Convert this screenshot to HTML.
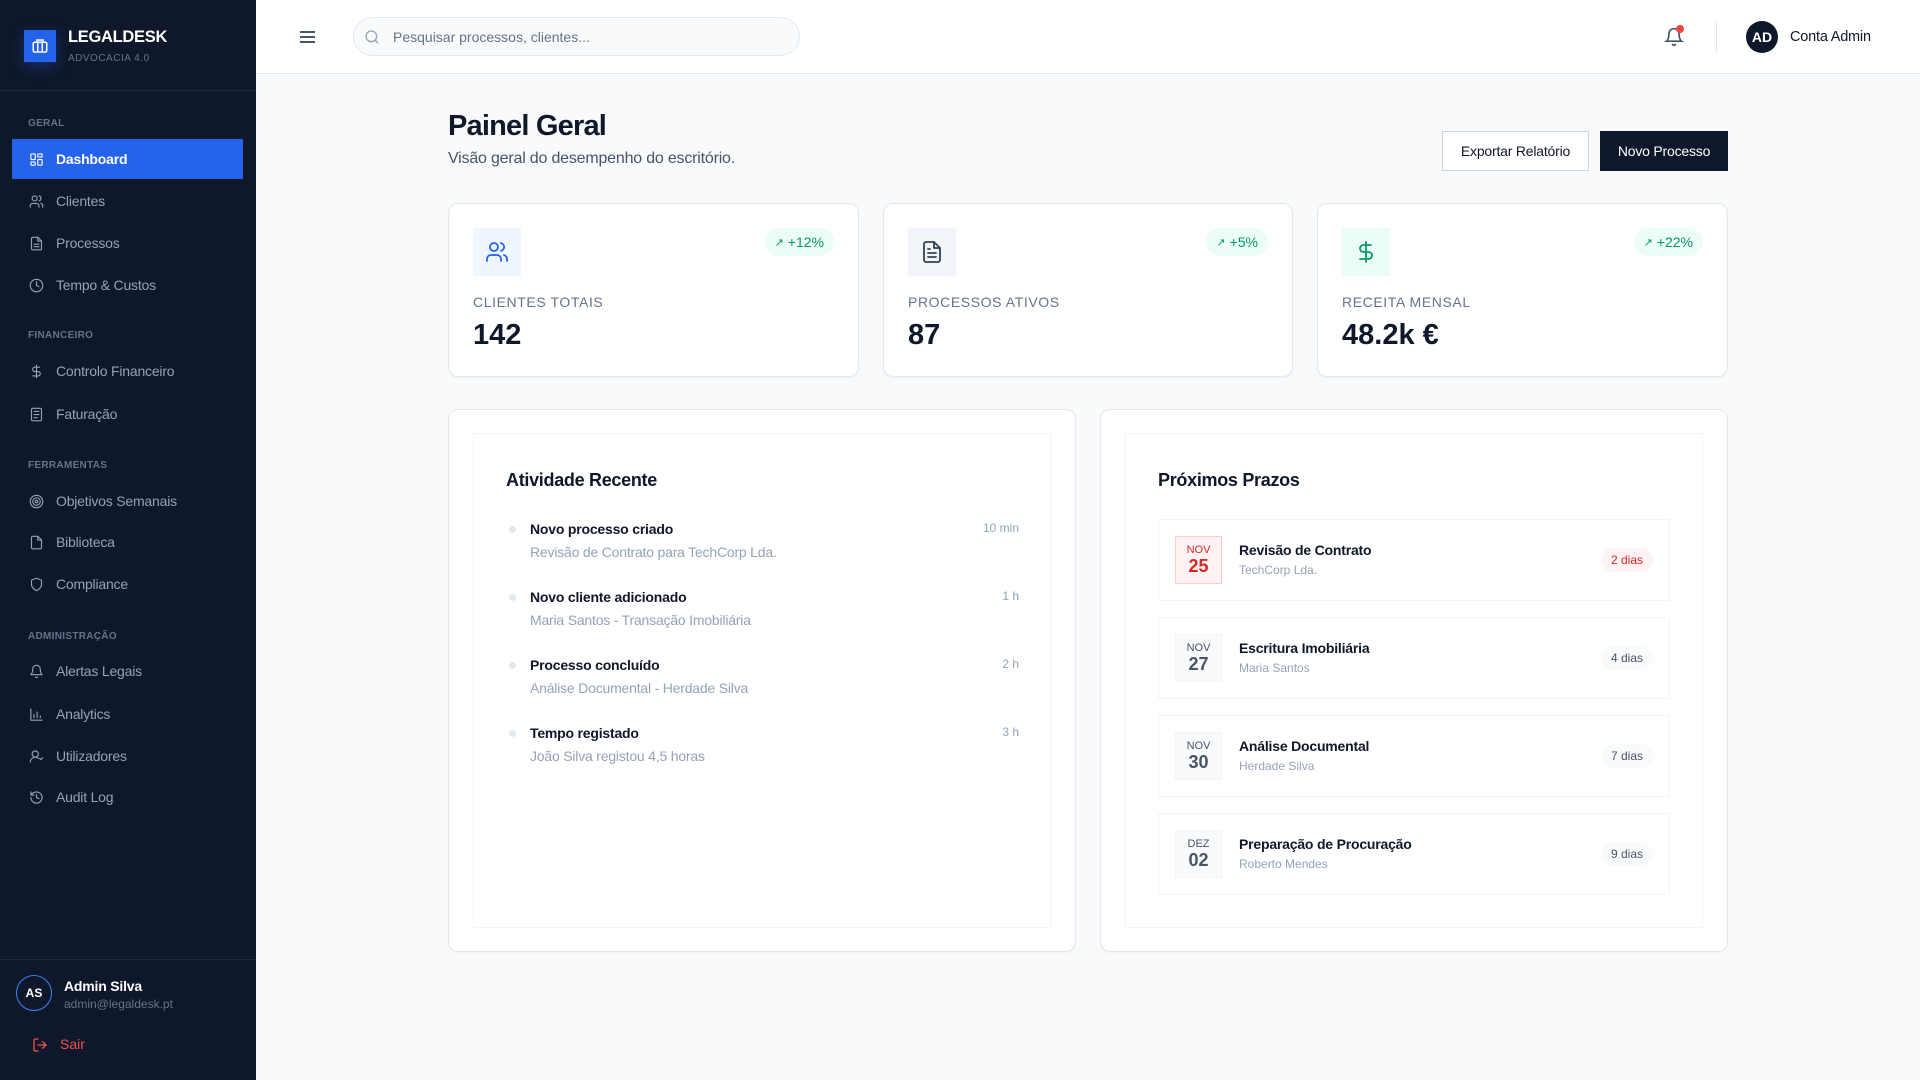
<!DOCTYPE html>
<html><head><meta charset="utf-8"><style>
*{box-sizing:border-box;margin:0;padding:0}
body{width:1920px;height:1080px;overflow:hidden;background:#f8fafc;font-family:"Liberation Sans",sans-serif;position:relative;color:#0f172a}
.abs{position:absolute}
#sb{left:0;top:0;width:256px;height:1080px;background:#0f172a}
.sec{position:absolute;left:28px;font-size:10px;font-weight:bold;color:#64748b;letter-spacing:.3px}
.it{position:absolute;left:12px;width:231px;height:40px;display:flex;align-items:center;padding-left:17px;color:#94a3b8;font-size:14px;letter-spacing:-.2px}
.it svg{width:15px;height:15px;margin-right:12px;fill:none;stroke:currentColor;stroke-width:1.8;stroke-linecap:round;stroke-linejoin:round}
.it.on{background:#2563eb;color:#fff;font-weight:bold}
.card{position:absolute;background:#fff;border:1px solid #e2e8f0;border-radius:10px;box-shadow:0 1px 2px rgba(0,0,0,.04)}
.ib{position:absolute;left:24px;top:24px;width:48px;height:48px;display:flex;align-items:center;justify-content:center}
.ib svg{width:24px;height:24px;fill:none;stroke-width:1.8;stroke-linecap:round;stroke-linejoin:round}
.badge{position:absolute;top:24px;right:24px;height:28px;padding:0 10px;border-radius:14px;background:#ecfdf5;color:#059669;font-size:14px;display:flex;align-items:center;gap:4px}
.lbl{position:absolute;left:24px;top:90px;font-size:14px;color:#64748b;letter-spacing:.6px}
.val{position:absolute;left:24px;top:115px;font-size:29px;font-weight:bold;color:#0f172a}
.act{position:absolute;left:509px;width:510px}
.act .d{position:absolute;left:0;top:5px;width:7px;height:7px;border-radius:50%;background:#e2e8f0}
.act .t{position:absolute;left:21px;top:0;font-size:14px;font-weight:bold;color:#0f172a;letter-spacing:-.2px}
.act .s{position:absolute;left:21px;top:23px;font-size:14px;color:#94a3b8;letter-spacing:-.2px}
.act .tm{position:absolute;right:0;top:0;font-size:12px;color:#94a3b8}
.dl{position:absolute;left:1158px;width:512px;height:82px;border:1px solid #f1f5f9;background:#fff}
.db{position:absolute;left:16px;top:16px;width:47px;height:48px;background:#f8fafc;border:1px solid #f1f5f9;text-align:center;color:#475569}
.db .m{font-size:11px;margin-top:7px;line-height:12px}
.db .n{font-size:18px;font-weight:bold;line-height:20px}
.dl .t{position:absolute;left:80px;top:22px;font-size:14px;font-weight:bold;color:#0f172a;letter-spacing:-.2px}
.dl .s{position:absolute;left:80px;top:43px;font-size:12px;color:#94a3b8}
.dl .b{position:absolute;right:16px;top:28px;height:24px;padding:0 10px;border-radius:12px;background:#f8fafc;color:#475569;font-size:12px;display:flex;align-items:center}
</style></head><body>
<div id="sb" class="abs">
 <div class="abs" style="left:0;top:90px;width:256px;height:1px;background:#1e293b"></div>
 <div class="abs" style="left:24px;top:30px;width:32px;height:32px;background:#2563eb;display:flex;align-items:center;justify-content:center;box-shadow:0 4px 14px rgba(37,99,235,.35)">
  <svg width="18" height="18" viewBox="0 0 24 24" fill="none" stroke="#fff" stroke-width="2" stroke-linecap="round"><rect x="3" y="7" width="18" height="13" rx="2"/><path d="M8 7V4h8v3M9 7v13M15 7v13"/></svg></div>
 <div class="abs" style="left:68px;top:28px;font-size:16.5px;font-weight:bold;color:#fff;letter-spacing:-.3px">LEGALDESK</div>
 <div class="abs" style="left:68px;top:53px;font-size:10px;color:#64748b;letter-spacing:.5px">ADVOCACIA 4.0</div>
 <div class="sec" style="top:118px">GERAL</div>
 <div class="it on" style="top:139px"><svg viewBox="0 0 24 24"><rect x="3" y="3" width="7" height="9" rx="1"/><rect x="14" y="3" width="7" height="5" rx="1"/><rect x="14" y="12" width="7" height="9" rx="1"/><rect x="3" y="16" width="7" height="5" rx="1"/></svg>Dashboard</div>
 <div class="it" style="top:181px"><svg viewBox="0 0 24 24"><circle cx="9" cy="7" r="4"/><path d="M2 21v-2a4 4 0 014-4h6a4 4 0 014 4v2M16 3.1a4 4 0 010 7.8M22 21v-2a4 4 0 00-3-3.9"/></svg>Clientes</div>
 <div class="it" style="top:223px"><svg viewBox="0 0 24 24"><path d="M14 2H6a2 2 0 00-2 2v16a2 2 0 002 2h12a2 2 0 002-2V8z"/><path d="M14 2v6h6M8 13h8M8 17h8"/></svg>Processos</div>
 <div class="it" style="top:265px"><svg viewBox="0 0 24 24"><circle cx="12" cy="12" r="10"/><path d="M12 6v6l4 2"/></svg>Tempo &amp; Custos</div>
 <div class="sec" style="top:330px">FINANCEIRO</div>
 <div class="it" style="top:351px"><svg viewBox="0 0 24 24"><path d="M12 2v20M17 5H9.5a3.5 3.5 0 000 7h5a3.5 3.5 0 010 7H6"/></svg>Controlo Financeiro</div>
 <div class="it" style="top:394px"><svg viewBox="0 0 24 24"><rect x="4" y="2" width="16" height="20" rx="2"/><path d="M8 7h8M8 12h8M8 17h5"/></svg>Faturação</div>
 <div class="sec" style="top:460px">FERRAMENTAS</div>
 <div class="it" style="top:481px"><svg viewBox="0 0 24 24"><circle cx="12" cy="12" r="10"/><circle cx="12" cy="12" r="6"/><circle cx="12" cy="12" r="2"/></svg>Objetivos Semanais</div>
 <div class="it" style="top:522px"><svg viewBox="0 0 24 24"><path d="M14 2H6a2 2 0 00-2 2v16a2 2 0 002 2h12a2 2 0 002-2V8z"/><path d="M14 2v6h6"/></svg>Biblioteca</div>
 <div class="it" style="top:564px"><svg viewBox="0 0 24 24"><path d="M12 22s8-4 8-10V5l-8-3-8 3v7c0 6 8 10 8 10z"/></svg>Compliance</div>
 <div class="sec" style="top:631px">ADMINISTRAÇÃO</div>
 <div class="it" style="top:651px"><svg viewBox="0 0 24 24"><path d="M18 8A6 6 0 006 8c0 7-3 9-3 9h18s-3-2-3-9M13.7 21a2 2 0 01-3.4 0"/></svg>Alertas Legais</div>
 <div class="it" style="top:694px"><svg viewBox="0 0 24 24"><path d="M3 3v18h18M8 17v-5M13 17V8M18 17v-3"/></svg>Analytics</div>
 <div class="it" style="top:736px"><svg viewBox="0 0 24 24"><circle cx="10" cy="8" r="5"/><path d="M2 21a8 8 0 0113-6M17 15l2 2 3-3"/></svg>Utilizadores</div>
 <div class="it" style="top:777px"><svg viewBox="0 0 24 24"><path d="M3 12a9 9 0 109-9 9.7 9.7 0 00-6.7 2.7L3 8M3 3v5h5M12 7v5l4 2"/></svg>Audit Log</div>
 <div class="abs" style="left:0;top:959px;width:256px;height:1px;background:#1e293b"></div>
 <div class="abs" style="left:16px;top:975px;width:36px;height:36px;border-radius:50%;border:1.5px solid #3b82f6;color:#fff;font-size:12px;font-weight:bold;display:flex;align-items:center;justify-content:center">AS</div>
 <div class="abs" style="left:64px;top:978px;font-size:14px;font-weight:bold;color:#fff;letter-spacing:-.2px">Admin Silva</div>
 <div class="abs" style="left:64px;top:997px;font-size:12px;color:#64748b">admin@legaldesk.pt</div>
 <svg class="abs" style="left:32px;top:1037px" width="16" height="16" viewBox="0 0 24 24" fill="none" stroke="#ef5350" stroke-width="2" stroke-linecap="round" stroke-linejoin="round"><path d="M9 21H5a2 2 0 01-2-2V5a2 2 0 012-2h4M16 17l5-5-5-5M21 12H9"/></svg>
 <div class="abs" style="left:60px;top:1036px;font-size:14px;color:#ef5350">Sair</div>
</div>
<div class="abs" style="left:256px;top:0;width:1664px;height:74px;background:#fff;border-bottom:1px solid #e2e8f0"></div>
<svg class="abs" style="left:299px;top:29px" width="17" height="16" viewBox="0 0 17 16" stroke="#475569" stroke-width="2"><path d="M1 3h15M1 8h15M1 13h15"/></svg>
<div class="abs" style="left:353px;top:17px;width:447px;height:39px;border:1px solid #e2e8f0;border-radius:20px;background:#f8fafc"></div>
<svg class="abs" style="left:364px;top:29px" width="16" height="16" viewBox="0 0 24 24" fill="none" stroke="#94a3b8" stroke-width="2"><circle cx="11" cy="11" r="8"/><path d="M21 21l-4.3-4.3"/></svg>
<div class="abs" style="left:393px;top:29px;font-size:14px;color:#64748b">Pesquisar processos, clientes...</div>
<svg class="abs" style="left:1664px;top:27px" width="20" height="20" viewBox="0 0 24 24" fill="none" stroke="#475569" stroke-width="2" stroke-linecap="round"><path d="M18 8A6 6 0 006 8c0 7-3 9-3 9h18s-3-2-3-9M13.7 21a2 2 0 01-3.4 0"/></svg>
<div class="abs" style="left:1676px;top:25px;width:8px;height:8px;border-radius:50%;background:#ef4444"></div>
<div class="abs" style="left:1716px;top:21px;width:1px;height:32px;background:#e2e8f0"></div>
<div class="abs" style="left:1746px;top:21px;width:32px;height:32px;border-radius:50%;background:#0f172a;color:#fff;font-size:14px;font-weight:bold;display:flex;align-items:center;justify-content:center">AD</div>
<div class="abs" style="left:1790px;top:29px;font-size:14.5px;color:#0f172a;letter-spacing:-.2px">Conta Admin</div>
<div class="abs" style="left:448px;top:110px;font-size:29px;font-weight:bold;letter-spacing:-.8px">Painel Geral</div>
<div class="abs" style="left:448px;top:150px;font-size:16px;color:#475569;letter-spacing:-.2px">Visão geral do desempenho do escritório.</div>
<div class="abs" style="left:1442px;top:131px;width:147px;height:40px;border:1px solid #cbd5e1;background:#fff;font-size:14px;display:flex;align-items:center;justify-content:center;color:#0f172a;letter-spacing:-.2px">Exportar Relatório</div>
<div class="abs" style="left:1600px;top:131px;width:128px;height:40px;background:#0f172a;color:#fff;font-size:14px;display:flex;align-items:center;justify-content:center;letter-spacing:-.2px">Novo Processo</div>
<div class="card" style="left:448px;top:203px;width:411px;height:174px">
 <div class="ib" style="background:#eff6ff"><svg viewBox="0 0 24 24" stroke="#2563eb"><circle cx="9" cy="7" r="4"/><path d="M2 21v-2a4 4 0 014-4h6a4 4 0 014 4v2M16 3.1a4 4 0 010 7.8M22 21v-2a4 4 0 00-3-3.9"/></svg></div>
 <div class="badge"><span style="font-size:11px">↗</span>+12%</div>
 <div class="lbl">CLIENTES TOTAIS</div><div class="val">142</div></div>
<div class="card" style="left:883px;top:203px;width:410px;height:174px">
 <div class="ib" style="background:#f1f5f9"><svg viewBox="0 0 24 24" stroke="#334155"><path d="M14 2H6a2 2 0 00-2 2v16a2 2 0 002 2h12a2 2 0 002-2V8z"/><path d="M14 2v6h6M8 13h8M8 17h8M8 9h2"/></svg></div>
 <div class="badge"><span style="font-size:11px">↗</span>+5%</div>
 <div class="lbl">PROCESSOS ATIVOS</div><div class="val">87</div></div>
<div class="card" style="left:1317px;top:203px;width:411px;height:174px">
 <div class="ib" style="background:#ecfdf5"><svg viewBox="0 0 24 24" stroke="#059669"><path d="M12 2v20M17 5H9.5a3.5 3.5 0 000 7h5a3.5 3.5 0 010 7H6"/></svg></div>
 <div class="badge"><span style="font-size:11px">↗</span>+22%</div>
 <div class="lbl">RECEITA MENSAL</div><div class="val">48.2k €</div></div>
<div class="card" style="left:448px;top:409px;width:628px;height:543px"></div>
<div class="abs" style="left:473px;top:433px;width:578px;height:495px;border:1px solid #f1f5f9;background:#fff"></div>
<div class="card" style="left:1100px;top:409px;width:628px;height:543px"></div>
<div class="abs" style="left:1125px;top:433px;width:578px;height:495px;border:1px solid #f1f5f9;background:#fff"></div>
<div class="abs" style="left:506px;top:470px;font-size:18px;font-weight:bold;color:#0f172a;letter-spacing:-.3px">Atividade Recente</div>
<div class="abs" style="left:1158px;top:470px;font-size:18px;font-weight:bold;color:#0f172a;letter-spacing:-.3px">Próximos Prazos</div>
<div class="act" style="top:521px"><div class="d"></div><div class="t">Novo processo criado</div><div class="s">Revisão de Contrato para TechCorp Lda.</div><div class="tm">10 min</div></div>
<div class="act" style="top:589px"><div class="d"></div><div class="t">Novo cliente adicionado</div><div class="s">Maria Santos - Transação Imobiliária</div><div class="tm">1 h</div></div>
<div class="act" style="top:657px"><div class="d"></div><div class="t">Processo concluído</div><div class="s">Análise Documental - Herdade Silva</div><div class="tm">2 h</div></div>
<div class="act" style="top:725px"><div class="d"></div><div class="t">Tempo registado</div><div class="s">João Silva registou 4,5 horas</div><div class="tm">3 h</div></div>
<div class="dl" style="top:519px"><div class="db" style="background:#fef2f2;border-color:#fecaca;color:#dc2626"><div class="m">NOV</div><div class="n">25</div></div><div class="t">Revisão de Contrato</div><div class="s">TechCorp Lda.</div><div class="b" style="background:#fef2f2;color:#dc2626">2 dias</div></div>
<div class="dl" style="top:617px"><div class="db"><div class="m">NOV</div><div class="n">27</div></div><div class="t">Escritura Imobiliária</div><div class="s">Maria Santos</div><div class="b">4 dias</div></div>
<div class="dl" style="top:715px"><div class="db"><div class="m">NOV</div><div class="n">30</div></div><div class="t">Análise Documental</div><div class="s">Herdade Silva</div><div class="b">7 dias</div></div>
<div class="dl" style="top:813px"><div class="db"><div class="m">DEZ</div><div class="n">02</div></div><div class="t">Preparação de Procuração</div><div class="s">Roberto Mendes</div><div class="b">9 dias</div></div>
</body></html>
